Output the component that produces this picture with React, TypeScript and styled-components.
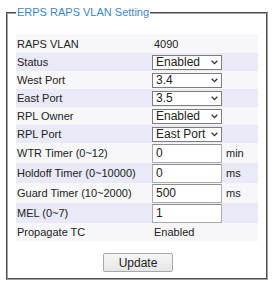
import React from "react";
import styled, { createGlobalStyle } from "styled-components";

const GlobalStyle = createGlobalStyle`
    html, body {
        margin: 0;
        padding: 0;
        background: #fff;
    }
    body {
        font-family: "Liberation Sans", Arial, sans-serif;
        color: #222;
    }
`;

const Page = styled.div`
    padding: 6px 0 0 6px;
`;

const Fieldset = styled.fieldset`
    box-sizing: border-box;
    width: 262px;
    margin: 0;
    padding: 15px 6px 6px 8px;
    border: 2px groove #a2a2a2;
    legend {
        padding: 0 1px;
        font-size: 11px;
        color: #3d86c6;
        line-height: 13px;
    }
`;

const Table = styled.div`
    display: flex;
    flex-direction: column;
    width: 242px;
`;

const Row = styled.div<{ $alt?: boolean; $h: number }>`
    display: grid;
    grid-template-columns: 135px 1fr;
    align-items: center;
    height: ${(p) => p.$h}px;
    background: ${(p) => (p.$alt ? "#e9e9f7" : "#f7f7f9")};
    font-size: 11px;
`;

const Label = styled.div`
    padding-left: 1px;
`;

const Value = styled.div`
    display: flex;
    align-items: center;
    gap: 4px;
    padding-left: 1px;
    .text {
        padding-left: 2px;
    }
`;

const SelectBox = styled.div`
    position: relative;
    width: 70px;
    height: 15px;
    select {
        appearance: none;
        box-sizing: border-box;
        width: 100%;
        height: 100%;
        margin: 0;
        padding: 0 0 0 3px;
        border: 1px solid #7d7d7d;
        border-radius: 0;
        background: #fff;
        font-family: "Liberation Sans", Arial, sans-serif;
        font-size: 12px;
        line-height: 13px;
        color: #222;
        outline: none;
    }
    svg {
        position: absolute;
        right: 4px;
        top: 5px;
        pointer-events: none;
    }
`;

const TextInput = styled.input`
    box-sizing: border-box;
    width: 70px;
    height: 19px;
    margin: 0;
    padding: 0 3px;
    border: 1px solid #ababab;
    border-top-color: #8f8f8f;
    background: #fff;
    font-family: "Liberation Sans", Arial, sans-serif;
    font-size: 12px;
    color: #222;
    outline: none;
`;

const Unit = styled.span`
    font-size: 11px;
`;

const Actions = styled.div`
    display: flex;
    justify-content: center;
    padding: 12px 0 0;
`;

const Button = styled.button`
    width: 70px;
    height: 19px;
    margin: 0;
    padding: 0;
    border: 1px solid #a8a8a8;
    border-radius: 2px;
    background: linear-gradient(#f6f6f6, #e6e6e6);
    font-family: "Liberation Sans", Arial, sans-serif;
    font-size: 12px;
    color: #222;
`;

const Chevron = () => (
    <svg width="7" height="5" viewBox="0 0 7 5">
        <path d="M0.7 0.8 L3.5 3.6 L6.3 0.8" fill="none" stroke="#333" strokeWidth="1.3" />
    </svg>
);

const Select = ({ value, options }: { value: string; options: string[] }) => (
    <SelectBox>
        <select defaultValue={value}>
            {options.map((o) => (
                <option key={o}>{o}</option>
            ))}
        </select>
        <Chevron />
    </SelectBox>
);

const ports = ["3.1", "3.2", "3.3", "3.4", "3.5", "3.6"];

const App = () => {
    return (
        <>
            <GlobalStyle />
            <Page>
                <Fieldset>
                    <legend>ERPS RAPS VLAN Setting</legend>
                    <Table>
                        <Row $h={19}>
                            <Label>RAPS VLAN</Label>
                            <Value>
                                <span className="text">4090</span>
                            </Value>
                        </Row>
                        <Row $alt $h={18}>
                            <Label>Status</Label>
                            <Value>
                                <Select value="Enabled" options={["Enabled", "Disabled"]} />
                            </Value>
                        </Row>
                        <Row $h={18}>
                            <Label>West Port</Label>
                            <Value>
                                <Select value="3.4" options={ports} />
                            </Value>
                        </Row>
                        <Row $alt $h={18}>
                            <Label>East Port</Label>
                            <Value>
                                <Select value="3.5" options={ports} />
                            </Value>
                        </Row>
                        <Row $h={18}>
                            <Label>RPL Owner</Label>
                            <Value>
                                <Select value="Enabled" options={["Enabled", "Disabled"]} />
                            </Value>
                        </Row>
                        <Row $alt $h={18}>
                            <Label>RPL Port</Label>
                            <Value>
                                <Select value="East Port" options={["West Port", "East Port"]} />
                            </Value>
                        </Row>
                        <Row $h={20}>
                            <Label>WTR Timer (0~12)</Label>
                            <Value>
                                <TextInput defaultValue="0" />
                                <Unit>min</Unit>
                            </Value>
                        </Row>
                        <Row $alt $h={20}>
                            <Label>Holdoff Timer (0~10000)</Label>
                            <Value>
                                <TextInput defaultValue="0" />
                                <Unit>ms</Unit>
                            </Value>
                        </Row>
                        <Row $h={20}>
                            <Label>Guard Timer (10~2000)</Label>
                            <Value>
                                <TextInput defaultValue="500" />
                                <Unit>ms</Unit>
                            </Value>
                        </Row>
                        <Row $alt $h={20}>
                            <Label>MEL (0~7)</Label>
                            <Value>
                                <TextInput defaultValue="1" />
                            </Value>
                        </Row>
                        <Row $h={18}>
                            <Label>Propagate TC</Label>
                            <Value>
                                <span className="text">Enabled</span>
                            </Value>
                        </Row>
                    </Table>
                    <Actions>
                        <Button>Update</Button>
                    </Actions>
                </Fieldset>
            </Page>
        </>
    );
};

export default App;
